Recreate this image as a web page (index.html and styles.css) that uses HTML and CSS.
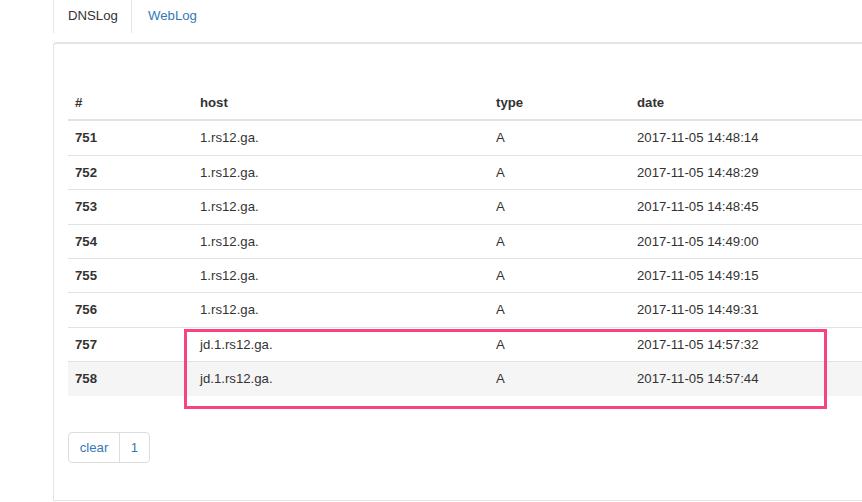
FILE: index.html
```html
<!DOCTYPE html>
<html>
<head>
<meta charset="utf-8">
<link rel="stylesheet" href="styles.css">
</head>
<body>
<div class="page">
  <ul class="tabs">
    <li class="tab active">DNSLog</li>
    <li class="tab"><a href="#">WebLog</a></li>
  </ul>
  <div class="panel">
    <table class="log">
      <colgroup>
        <col class="c-id"><col class="c-host"><col class="c-type"><col>
      </colgroup>
      <thead>
        <tr><th>#</th><th>host</th><th>type</th><th>date</th></tr>
      </thead>
      <tbody>
        <tr><td class="num">751</td><td>1.rs12.ga.</td><td>A</td><td>2017-11-05 14:48:14</td></tr>
        <tr><td class="num">752</td><td>1.rs12.ga.</td><td>A</td><td>2017-11-05 14:48:29</td></tr>
        <tr><td class="num">753</td><td>1.rs12.ga.</td><td>A</td><td>2017-11-05 14:48:45</td></tr>
        <tr><td class="num">754</td><td>1.rs12.ga.</td><td>A</td><td>2017-11-05 14:49:00</td></tr>
        <tr><td class="num">755</td><td>1.rs12.ga.</td><td>A</td><td>2017-11-05 14:49:15</td></tr>
        <tr><td class="num">756</td><td>1.rs12.ga.</td><td>A</td><td>2017-11-05 14:49:31</td></tr>
        <tr><td class="num">757</td><td>jd.1.rs12.ga.</td><td>A</td><td>2017-11-05 14:57:32</td></tr>
        <tr class="hover"><td class="num">758</td><td>jd.1.rs12.ga.</td><td>A</td><td>2017-11-05 14:57:44</td></tr>
      </tbody>
    </table>
    <div class="pager">
      <a href="#" class="pg first">clear</a><a href="#" class="pg last">1</a>
    </div>
    <div class="mark"></div>
  </div>
</div>
</body>
</html>
```

FILE: styles.css
```css
html, body {
  margin: 0;
  padding: 0;
  background: #fff;
  overflow: hidden;
}
body {
  font-family: "Liberation Sans", Arial, Helvetica, sans-serif;
  font-size: 13.2px;
  color: #333;
  width: 862px;
  height: 502px;
}
.page {
  padding-left: 53px;
}
.tabs {
  list-style: none;
  margin: 0;
  padding: 0;
  display: flex;
  height: 33px;
}
.tab {
  height: 33px;
  line-height: 31px;
  padding: 0 15px 0 16px;
  box-sizing: border-box;
}
.tab.active {
  border-left: 1px solid #e6e6e6;
  border-right: 1px solid #e6e6e6;
  width: 79px;
  padding-left: 14px;
}
.tab a {
  color: #337ab7;
  text-decoration: none;
}
.panel {
  position: relative;
  margin-top: 9px;
  height: 459px;
  box-sizing: border-box;
  border-top: 2px solid #e4e4e4;
  border-left: 1px solid #e4e4e4;
  border-bottom: 1px solid #e4e4e4;
  border-top-left-radius: 4px;
  padding: 42px 0 0 14px;
}
.log {
  border-collapse: collapse;
  width: 820px;
}
.c-id { width: 125px; }
.c-host { width: 296px; }
.c-type { width: 141px; }
.log th, .log td {
  text-align: left;
  padding: 8px 7px;
  line-height: 17.4px;
  white-space: nowrap;
}
.log th {
  font-weight: bold;
  border-bottom: 2px solid #e2e2e2;
}
.log td {
  border-top: 1px solid #e2e2e2;
}
.log td.num {
  font-weight: bold;
}
.log tr.hover td {
  background: #f5f5f5;
}
.pager {
  display: flex;
  margin-top: 36px;
}
.pg {
  display: block;
  height: 31px;
  line-height: 29px;
  box-sizing: border-box;
  border: 1px solid #ddd;
  color: #337ab7;
  text-decoration: none;
  text-align: center;
}
.pg.first {
  width: 52px;
  border-radius: 4px 0 0 4px;
}
.pg.last {
  width: 31px;
  margin-left: -1px;
  border-radius: 0 4px 4px 0;
}
.mark {
  position: absolute;
  left: 130px;
  top: 285px;
  width: 643px;
  height: 80px;
  box-sizing: border-box;
  border: 3px solid #f7447f;
}
```
